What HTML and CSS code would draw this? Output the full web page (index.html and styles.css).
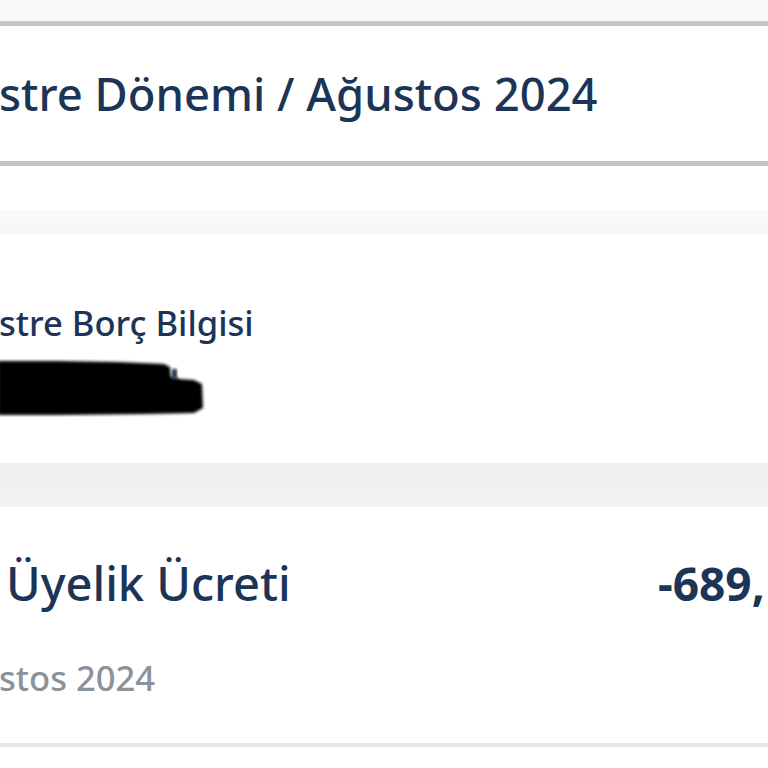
FILE: index.html
```html
<!DOCTYPE html>
<html lang="tr">
<head>
<meta charset="utf-8">
<link rel="stylesheet" href="styles.css">
</head>
<body>
<div class="page">
  <div class="top-gap"></div>
  <section class="period">
    <div class="period-text">stre Dönemi / Ağustos 2024</div>
  </section>
  <div class="gap-white"></div>
  <div class="band-light"></div>
  <section class="card debt">
    <div class="debt-title">stre Borç Bilgisi</div>
    <svg class="scribble" viewBox="0 0 210 58" width="210" height="58" aria-hidden="true">
      <defs>
        <filter id="soft" x="-5%" y="-20%" width="110%" height="140%">
          <feGaussianBlur stdDeviation="1.4"/>
        </filter>
      </defs>
      <path d="M0 2 L60 2 L120 3 L166 5 L172 8 L173 18 L180 19 L181 20 L196 21 L204 25 L205 49 L196 54 L150 55 L60 56 L0 56 Z" fill="#050505" filter="url(#soft)"/>
      <path d="M174 10 L179 10 L179 20 L174 20 Z" fill="#1a2d4a" filter="url(#soft)"/>
    </svg>
  </section>
  <div class="band-gray"></div>
  <section class="card fee">
    <div class="fee-row">
      <div class="fee-title">Üyelik Ücreti</div>
      <div class="fee-amount">-689,</div>
    </div>
    <div class="fee-date">stos 2024</div>
  </section>
  <div class="bottom-line"></div>
</div>
</body>
</html>
```

FILE: styles.css
```css
html, body {
  margin: 0;
  padding: 0;
  background: #ffffff;
  overflow: hidden;
}
.page {
  width: 768px;
  height: 768px;
  overflow: hidden;
  font-family: "Noto Sans", "Open Sans", sans-serif;
  display: flex;
  flex-direction: column;
}
.top-gap {
  height: 21px;
  background: #f7f8fa;
  flex: none;
}
.period {
  flex: none;
  border-top: 5px solid #c4c5ca;
  border-bottom: 5px solid #c4c5ca;
  background: #ffffff;
  display: flex;
  align-items: center;
  padding-bottom: 2px;
  box-sizing: border-box;
  height: 145px;
}
.period-text {
  font-size: 45.4px;
  font-weight: 500;
  color: #1c3557;
  white-space: nowrap;
  margin-left: -1px;
}
.gap-white {
  flex: none;
  height: 44px;
  background: #ffffff;
}
.band-light {
  flex: none;
  height: 24px;
  background: linear-gradient(#fafafa, #f6f6f6);
}
.card {
  flex: none;
  background: #ffffff;
}
.debt {
  height: 229px;
  display: flex;
  flex-direction: column;
  padding-top: 64px;
  box-sizing: border-box;
}
.debt-title {
  font-size: 34.6px;
  font-weight: 500;
  color: #1c3557;
  white-space: nowrap;
  line-height: 50px;
  margin-left: -1px;
}
.scribble {
  display: block;
  margin-top: 11px;
  margin-left: -2px;
}
.band-gray {
  flex: none;
  height: 44px;
  background: linear-gradient(#eeeeee, #f3f3f3);
}
.fee {
  height: 236px;
  padding-top: 45px;
  box-sizing: border-box;
}
.fee-row {
  display: flex;
  justify-content: space-between;
  align-items: center;
  height: 62px;
}
.fee-title {
  font-size: 47px;
  font-weight: 500;
  color: #1c3557;
  white-space: nowrap;
  margin-left: 6px;
}
.fee-amount {
  font-size: 46px;
  font-weight: 700;
  color: #1c3557;
  white-space: nowrap;
  width: 110px;
}
.fee-date {
  margin-top: 40px;
  font-size: 34.6px;
  font-weight: 500;
  color: #8a929c;
  white-space: nowrap;
  margin-left: -1px;
}
.bottom-line {
  flex: none;
  height: 4px;
  background: #e6e6ee;
}
```
